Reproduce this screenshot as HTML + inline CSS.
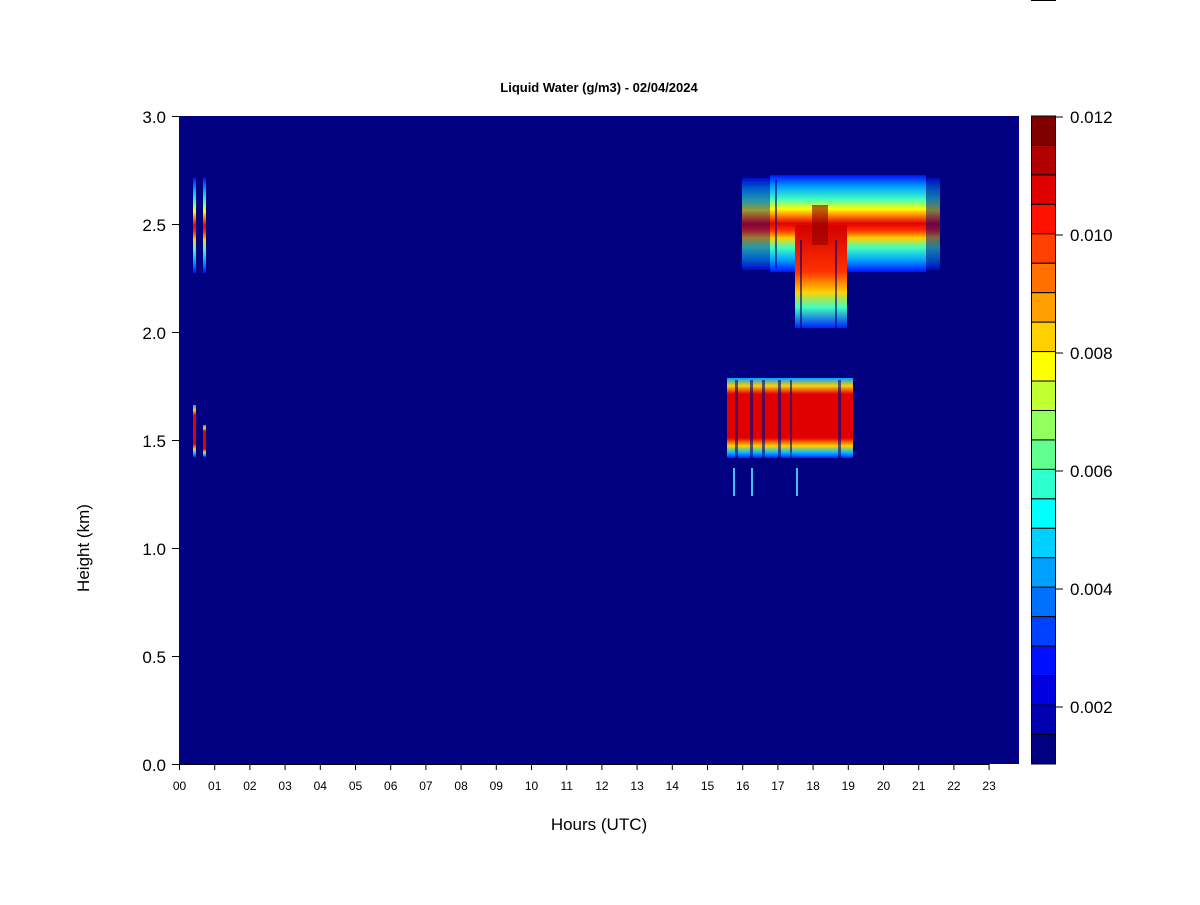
<!DOCTYPE html><html><head><style>body{margin:0;background:#fff}svg text{font-family:"Liberation Sans",Arial,sans-serif}</style></head><body>
<svg width="1200" height="900" xmlns="http://www.w3.org/2000/svg">
<defs>
<linearGradient id="up" x1="0" y1="0" x2="0" y2="1">
<stop offset="0" stop-color="#0010ff"/><stop offset="0.12" stop-color="#00a0ff"/><stop offset="0.25" stop-color="#40ffc0"/><stop offset="0.35" stop-color="#ffff00"/><stop offset="0.43" stop-color="#ff7000"/><stop offset="0.5" stop-color="#e00000"/><stop offset="0.57" stop-color="#ff3000"/><stop offset="0.65" stop-color="#ffd000"/><stop offset="0.75" stop-color="#40ffc0"/><stop offset="0.88" stop-color="#00a0ff"/><stop offset="1" stop-color="#0010ff"/></linearGradient>
<linearGradient id="hang" x1="0" y1="0" x2="0" y2="1">
<stop offset="0" stop-color="#d00000"/><stop offset="0.45" stop-color="#ff3000"/><stop offset="0.65" stop-color="#ffd000"/><stop offset="0.8" stop-color="#40ffc0"/><stop offset="1" stop-color="#0020ff"/></linearGradient>
<linearGradient id="low" x1="0" y1="0" x2="0" y2="1">
<stop offset="0" stop-color="#00a0ff"/><stop offset="0.1" stop-color="#ffd000"/><stop offset="0.2" stop-color="#e00000"/><stop offset="0.75" stop-color="#e00000"/><stop offset="0.85" stop-color="#ffd000"/><stop offset="0.93" stop-color="#00c0ff"/><stop offset="1" stop-color="#0020ff"/></linearGradient>
</defs>
<text x="599" y="92" font-size="13" font-weight="bold" text-anchor="middle">Liquid Water (g/m3) - 02/04/2024</text>
<rect x="1031" y="0" width="25" height="1" fill="#000"/>
<rect x="179" y="116" width="840" height="648" fill="#000080"/>
<rect x="770" y="175" width="156" height="97" fill="url(#up)"/>
<rect x="742" y="178" width="28" height="92" fill="url(#up)" opacity="0.6"/>
<rect x="926" y="178" width="14" height="92" fill="url(#up)" opacity="0.5"/>
<rect x="795" y="225" width="52" height="103" fill="url(#hang)"/>
<rect x="812" y="205" width="16" height="40" fill="#900000" opacity="0.6"/>
<rect x="727" y="378" width="126" height="80" fill="url(#low)"/>
<g fill="#000080" opacity="0.6"><rect x="735" y="380" width="3" height="78"/><rect x="750" y="380" width="3" height="78"/><rect x="762" y="380" width="3" height="78"/><rect x="778" y="380" width="3" height="78"/><rect x="790" y="380" width="2" height="78"/><rect x="838" y="380" width="3" height="78"/><rect x="775" y="180" width="2" height="88"/><rect x="800" y="240" width="2" height="88"/><rect x="835" y="240" width="2" height="88"/></g>
<rect x="193" y="178" width="3" height="95" fill="url(#up)"/><rect x="203" y="178" width="3" height="95" fill="url(#up)"/>
<rect x="193" y="405" width="3" height="52" fill="url(#low)"/><rect x="203" y="425" width="3" height="32" fill="url(#low)"/>
<rect x="733" y="468" width="2" height="28" fill="#40c0ff"/><rect x="751" y="468" width="2" height="28" fill="#40c0ff"/><rect x="796" y="468" width="2" height="28" fill="#40c0ff"/>
<g stroke="#000" stroke-width="1">
<line x1="172" y1="116.5" x2="179" y2="116.5"/><line x1="172" y1="224.5" x2="179" y2="224.5"/><line x1="172" y1="332.5" x2="179" y2="332.5"/><line x1="172" y1="440.5" x2="179" y2="440.5"/><line x1="172" y1="548.5" x2="179" y2="548.5"/><line x1="172" y1="656.5" x2="179" y2="656.5"/><line x1="172" y1="764.5" x2="179" y2="764.5"/>
<line x1="179" y1="764.5" x2="989" y2="764.5"/>
<line x1="179.5" y1="764" x2="179.5" y2="770"/><line x1="214.7" y1="764" x2="214.7" y2="770"/><line x1="249.9" y1="764" x2="249.9" y2="770"/><line x1="285.1" y1="764" x2="285.1" y2="770"/><line x1="320.3" y1="764" x2="320.3" y2="770"/><line x1="355.5" y1="764" x2="355.5" y2="770"/><line x1="390.7" y1="764" x2="390.7" y2="770"/><line x1="425.9" y1="764" x2="425.9" y2="770"/><line x1="461.1" y1="764" x2="461.1" y2="770"/><line x1="496.3" y1="764" x2="496.3" y2="770"/><line x1="531.5" y1="764" x2="531.5" y2="770"/><line x1="566.7" y1="764" x2="566.7" y2="770"/><line x1="601.9" y1="764" x2="601.9" y2="770"/><line x1="637.1" y1="764" x2="637.1" y2="770"/><line x1="672.3" y1="764" x2="672.3" y2="770"/><line x1="707.5" y1="764" x2="707.5" y2="770"/><line x1="742.7" y1="764" x2="742.7" y2="770"/><line x1="777.9" y1="764" x2="777.9" y2="770"/><line x1="813.1" y1="764" x2="813.1" y2="770"/><line x1="848.3" y1="764" x2="848.3" y2="770"/><line x1="883.5" y1="764" x2="883.5" y2="770"/><line x1="918.7" y1="764" x2="918.7" y2="770"/><line x1="953.9" y1="764" x2="953.9" y2="770"/><line x1="989.1" y1="764" x2="989.1" y2="770"/>
</g>
<g font-size="12" text-anchor="middle">
<text x="179.5" y="790">00</text><text x="214.7" y="790">01</text><text x="249.9" y="790">02</text><text x="285.1" y="790">03</text><text x="320.3" y="790">04</text><text x="355.5" y="790">05</text><text x="390.7" y="790">06</text><text x="425.9" y="790">07</text><text x="461.1" y="790">08</text><text x="496.3" y="790">09</text><text x="531.5" y="790">10</text><text x="566.7" y="790">11</text><text x="601.9" y="790">12</text><text x="637.1" y="790">13</text><text x="672.3" y="790">14</text><text x="707.5" y="790">15</text><text x="742.7" y="790">16</text><text x="777.9" y="790">17</text><text x="813.1" y="790">18</text><text x="848.3" y="790">19</text><text x="883.5" y="790">20</text><text x="918.7" y="790">21</text><text x="953.9" y="790">22</text><text x="989.1" y="790">23</text>
</g>
<g font-size="17" text-anchor="end"><text x="166" y="123">3.0</text><text x="166" y="231">2.5</text><text x="166" y="339">2.0</text><text x="166" y="447">1.5</text><text x="166" y="555">1.0</text><text x="166" y="663">0.5</text><text x="166" y="771">0.0</text></g>
<text x="89" y="548" font-size="17" text-anchor="middle" transform="rotate(-90 89 548)">Height (km)</text>
<text x="599" y="830" font-size="17" text-anchor="middle">Hours (UTC)</text>
<g stroke="#000" stroke-width="1">
<rect x="1031.5" y="116" width="24" height="29.45" fill="#800000"/>
<rect x="1031.5" y="145.45" width="24" height="29.45" fill="#b00000"/>
<rect x="1031.5" y="174.9" width="24" height="29.45" fill="#e00000"/>
<rect x="1031.5" y="204.35" width="24" height="29.45" fill="#ff1000"/>
<rect x="1031.5" y="233.8" width="24" height="29.45" fill="#ff4000"/>
<rect x="1031.5" y="263.25" width="24" height="29.45" fill="#ff7000"/>
<rect x="1031.5" y="292.7" width="24" height="29.45" fill="#ffa000"/>
<rect x="1031.5" y="322.15" width="24" height="29.45" fill="#ffd000"/>
<rect x="1031.5" y="351.6" width="24" height="29.45" fill="#ffff00"/>
<rect x="1031.5" y="381.05" width="24" height="29.45" fill="#c0ff30"/>
<rect x="1031.5" y="410.5" width="24" height="29.45" fill="#90ff60"/>
<rect x="1031.5" y="439.95" width="24" height="29.45" fill="#60ff90"/>
<rect x="1031.5" y="469.4" width="24" height="29.45" fill="#30ffd0"/>
<rect x="1031.5" y="498.85" width="24" height="29.45" fill="#00ffff"/>
<rect x="1031.5" y="528.3" width="24" height="29.45" fill="#00d0ff"/>
<rect x="1031.5" y="557.75" width="24" height="29.45" fill="#00a0ff"/>
<rect x="1031.5" y="587.2" width="24" height="29.45" fill="#0070ff"/>
<rect x="1031.5" y="616.65" width="24" height="29.45" fill="#0040ff"/>
<rect x="1031.5" y="646.1" width="24" height="29.45" fill="#0010ff"/>
<rect x="1031.5" y="675.55" width="24" height="29.45" fill="#0000e0"/>
<rect x="1031.5" y="705" width="24" height="29.45" fill="#0000b0"/>
<rect x="1031.5" y="734.45" width="24" height="29.55" fill="#000080"/>
</g>
<g font-size="17"><text x="1070" y="123">0.012</text><text x="1070" y="241">0.010</text><text x="1070" y="359">0.008</text><text x="1070" y="477">0.006</text><text x="1070" y="595">0.004</text><text x="1070" y="713">0.002</text></g>
<g stroke="#000"><line x1="1056" y1="117" x2="1063" y2="117"/><line x1="1056" y1="235" x2="1063" y2="235"/><line x1="1056" y1="353" x2="1063" y2="353"/><line x1="1056" y1="471" x2="1063" y2="471"/><line x1="1056" y1="589" x2="1063" y2="589"/><line x1="1056" y1="707" x2="1063" y2="707"/></g>
</svg></body></html>
